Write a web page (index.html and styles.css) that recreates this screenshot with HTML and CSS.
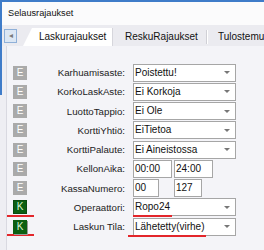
FILE: index.html
```html
<!DOCTYPE html>
<html lang="fi">
  <head>
    <meta charset="UTF-8" />
    <meta name="viewport" content="width=device-width, initial-scale=1.0" />
    <title>Selausrajaukset</title>
    <link rel="stylesheet" href="styles.css">
  </head>
  <body>
    <div class="window">
      <div class="caption-edge"></div>
      <div class="title">Selausrajaukset</div>
      <div class="tabs">
        <button type="button" class="tab-scroll">&#9666;</button>
        <div class="tab active">Laskurajaukset</div>
        <div class="tab">ReskuRajaukset</div>
        <div class="tab sep">Tulostemuoto</div>
      </div>
      <div class="panel">
        <div class="rows">
          <div class="mark"><span class="badge">E</span></div>
          <div class="label">Karhuamisaste:</div>
          <div class="select"><span class="value">Poistettu!</span><span class="arrow"></span></div>

          <div class="mark"><span class="badge">E</span></div>
          <div class="label">KorkoLaskAste:</div>
          <div class="select"><span class="value">Ei Korkoja</span><span class="arrow"></span></div>

          <div class="mark"><span class="badge">E</span></div>
          <div class="label">LuottoTappio:</div>
          <div class="select"><span class="value">Ei Ole</span><span class="arrow"></span></div>

          <div class="mark"><span class="badge">E</span></div>
          <div class="label">KorttiYhtiö:</div>
          <div class="select"><span class="value">EiTietoa</span><span class="arrow"></span></div>

          <div class="mark"><span class="badge">E</span></div>
          <div class="label">KorttiPalaute:</div>
          <div class="select"><span class="value">Ei Aineistossa</span><span class="arrow"></span></div>

          <div class="mark"><span class="badge">E</span></div>
          <div class="label">KellonAika:</div>
          <div class="pair">
            <span class="field time">00:00</span>
            <span class="field time">24:00</span>
          </div>

          <div class="mark"><span class="badge">E</span></div>
          <div class="label">KassaNumero:</div>
          <div class="pair">
            <span class="field num">00</span>
            <span class="field num">127</span>
          </div>

          <div class="mark flagged"><span class="badge on">K</span></div>
          <div class="label">Operaattori:</div>
          <div class="select"><span class="value marked">Ropo24</span><span class="arrow"></span></div>

          <div class="mark flagged"><span class="badge on raised">K</span></div>
          <div class="label">Laskun Tila:</div>
          <div class="select"><span class="value marked wide">Lähetetty(virhe)</span><span class="arrow"></span></div>
        </div>
      </div>
    </div>
  </body>
</html>
```

FILE: styles.css
```css
html,
body {
  margin: 0;
  padding: 0;
}
body {
  width: 264px;
  height: 250px;
  overflow: hidden;
  background-color: #eeeef3;
  font-family: "Liberation Sans", Arial, sans-serif;
  font-size: 10px;
  color: #222;
}
.window {
  position: relative;
  border-top: 2px solid #3f7cc9;
}
.caption-edge {
  position: absolute;
  left: 0;
  top: -2px;
  width: 2px;
  height: 95px;
  background-color: #3f7cc9;
}
.title {
  height: 23px;
  line-height: 23px;
  padding-left: 8px;
  font-size: 9.2px;
  background-color: #fbfbfc;
  color: #111;
}
.tabs {
  display: flex;
  align-items: flex-end;
  height: 21px;
  overflow: hidden;
  background-color: #ebebf0;
}
.tab-scroll {
  flex-shrink: 0;
  align-self: center;
  width: 13px;
  height: 14px;
  margin: 0 0 0 4px;
  padding: 0;
  border: 1px solid #8fb0d8;
  background-color: #dce7f4;
  color: #7a7a7a;
  font-size: 8px;
  line-height: 12px;
}
.tab {
  flex-shrink: 0;
  height: 18px;
  line-height: 17px;
  font-size: 10px;
  color: #111;
  box-sizing: border-box;
}
.tab.active {
  margin-left: 6px;
  width: 90px;
  padding-left: 16px;
  background-color: #fff;
  clip-path: polygon(9px 0, 100% 0, 100% 100%, 0 100%);
  border-right: 1px solid #d6d6dc;
}
.tab:nth-child(3) {
  margin-left: 12px;
  width: 81px;
}
.tab.sep {
  padding-left: 11px;
  border-left: 1px solid #d0d0d6;
  box-shadow: inset 1px 0 0 #fff;
  height: 14px;
  line-height: 13px;
  margin-bottom: 2px;
  white-space: nowrap;
}
.panel {
  margin-left: 6px;
  border-left: 1px solid #d9d9e1;
  background-color: #f4f4f8;
  height: 204px;
  padding-top: 17px;
  box-sizing: border-box;
}
.rows {
  display: grid;
  grid-template-columns: 27px 99px 103px;
  grid-auto-rows: 19.25px;
  align-items: center;
}
.mark {
  height: 100%;
  display: flex;
  align-items: center;
  padding-left: 6px;
  box-sizing: border-box;
}
.mark.flagged {
  border-bottom: 2px solid #e3262b;
  padding-top: 2px;
}
.badge {
  width: 14px;
  height: 14px;
  line-height: 14px;
  text-align: center;
  background-color: #aaaaaa;
  color: #fff;
  font-size: 10px;
}
.badge.on {
  background-color: #0c5f12;
  color: #d9f2d6;
  box-shadow: inset 0 0 0 1px #0a4a0e;
}
.badge.raised {
  box-shadow: 1px 1px 0 #9a9a9a;
}
.label {
  text-align: right;
  padding-right: 8px;
  font-size: 9.7px;
  white-space: nowrap;
}
.select {
  position: relative;
  display: flex;
  align-items: stretch;
  justify-content: space-between;
  height: 18px;
  box-sizing: border-box;
  border: 1px solid #a6a6a6;
  background-color: #fff;
  color: #111;
}
.value {
  position: relative;
  padding-left: 1px;
  line-height: 16px;
  white-space: nowrap;
}
.value.marked::after {
  content: "";
  position: absolute;
  left: -1px;
  right: -2px;
  bottom: -2px;
  height: 2px;
  background-color: #e3262b;
}
.value.wide::after {
  left: -6px;
}
.arrow {
  align-self: center;
  margin-right: 5px;
  width: 0;
  height: 0;
  border-left: 3px solid transparent;
  border-right: 3px solid transparent;
  border-top: 3px solid #777;
}
.pair {
  display: flex;
  gap: 2px;
}
.field {
  height: 18px;
  line-height: 16px;
  box-sizing: border-box;
  border: 1px solid #a6a6a6;
  background-color: #fff;
  color: #111;
  padding-left: 1px;
}
.field.time {
  width: 39px;
}
.field.num {
  width: 26px;
}
.field.num + .field.num {
  margin-left: 13px;
  width: 28px;
}
```
